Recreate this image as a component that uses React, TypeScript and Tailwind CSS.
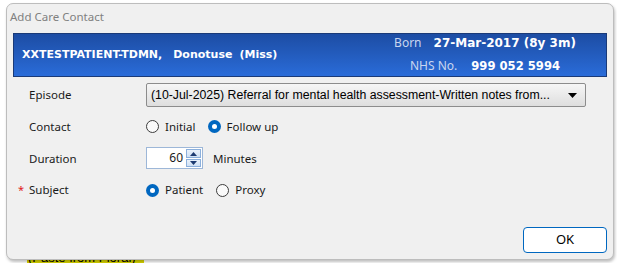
function Radio({ checked }: { checked: boolean }) {
  if (checked) {
    return (
      <span className="w-[13px] h-[13px] rounded-full bg-[#0067c0] flex items-center justify-center shrink-0">
        <span className="w-[5px] h-[5px] rounded-full bg-white" />
      </span>
    );
  }
  return <span className="w-[13px] h-[13px] rounded-full border border-[#3c3c3c] bg-[#fafafa] shrink-0" />;
}

function RadioOption({ checked, label, className }: { checked: boolean; label: string; className?: string }) {
  return (
    <label className={`flex items-center gap-[6px] ${className ?? ''}`}>
      <Radio checked={checked} />
      <span>{label}</span>
    </label>
  );
}

function App() {
  return (
    <div className="relative w-[617px] h-[263px] bg-white overflow-hidden font-['Noto_Sans',sans-serif] text-[11.5px] text-[#1a1a1a]">
      {/* text behind the dialog */}
      <div className="absolute left-[27px] top-[250px] w-[117px] h-[16px] bg-[#d8d400] font-['Liberation_Sans',sans-serif] text-[13px] leading-[16px] text-black pl-[1px]">
        (Paste from Floral)
      </div>

      <div className="relative ml-[6px] mt-[3px] w-[608px] h-[257px] rounded-[7px] border border-[#bdbdbd] bg-[#f0f0f0] shadow-[1px_2px_3px_rgba(0,0,0,0.25)] flex flex-col">
        {/* title */}
        <div className="h-[29px] pb-[3px] pl-[3px] flex items-center text-[#808080] text-[11.5px]">Add Care Contact</div>

        {/* patient banner */}
        <div className="mx-[6px] h-[44px] border border-[#1a3a78] bg-gradient-to-b from-[#1d4da4] to-[#2a6cd9] flex items-center font-['DejaVu_Sans',sans-serif] text-white">
          <div className="pl-[8px] font-bold text-[11px] flex">
            <span>XXTESTPATIENT-TDMN,</span>
            <span className="ml-[11px]">Donotuse</span>
            <span className="ml-[7px]">(Miss)</span>
          </div>
          <div className="ml-auto mr-[21px] w-[200px] flex flex-col items-center gap-[5px]">
            <div className="flex items-baseline">
              <span className="font-['Noto_Sans',sans-serif] text-[12px] text-[#c9d6ef]">Born</span>
              <span className="ml-[12px] font-bold text-[12px]">27-Mar-2017 (8y 3m)</span>
            </div>
            <div className="flex items-baseline">
              <span className="font-['Noto_Sans',sans-serif] text-[12px] text-[#c9d6ef]">NHS No.</span>
              <span className="ml-[14px] font-bold text-[11.6px]">999 052 5994</span>
            </div>
          </div>
        </div>

        {/* form */}
        <div className="mt-[6px] pl-[22px] flex flex-col gap-[7.7px]">
          <div className="h-[24px] grid grid-cols-[117px_1fr] items-center">
            <span>Episode</span>
            <div className="w-[440px] h-[24px] rounded-[2px] border border-[#8c8c8c] bg-gradient-to-b from-[#f6f6f6] to-[#dedede] flex items-center pl-[4px] pr-[8px] font-['Liberation_Sans',sans-serif] text-[12.3px] text-black">
              <span className="flex-1 truncate">(10-Jul-2025) Referral for mental health assessment-Written notes from...</span>
              <svg width="9" height="5" viewBox="0 0 9 5" className="ml-[10px]">
                <path d="M0 0h9L4.5 5z" fill="#000" />
              </svg>
            </div>
          </div>

          <div className="h-[24px] grid grid-cols-[117px_1fr] items-center">
            <span>Contact</span>
            <div className="flex items-center">
              <RadioOption checked={false} label="Initial" />
              <RadioOption checked={true} label="Follow up" className="ml-[12px]" />
            </div>
          </div>

          <div className="h-[24px] grid grid-cols-[117px_1fr] items-center">
            <span>Duration</span>
            <div className="flex items-center">
              <div className="w-[57px] h-[22px] border border-[#9db7d8] bg-white flex items-center">
                <span className="flex-1 text-right pr-[3px] text-[12px]">60</span>
                <div className="w-[15px] h-[18px] mr-[1px] flex flex-col gap-[1px]">
                  <div className="flex-1 border border-[#8cb0dc] bg-gradient-to-b from-[#eaf2fb] to-[#cfe0f4] flex items-center justify-center">
                    <svg width="7" height="4" viewBox="0 0 7 4"><path d="M0 4h7L3.5 0z" fill="#1c3a70" /></svg>
                  </div>
                  <div className="flex-1 border border-[#8cb0dc] bg-gradient-to-b from-[#eaf2fb] to-[#cfe0f4] flex items-center justify-center">
                    <svg width="7" height="4" viewBox="0 0 7 4"><path d="M0 0h7L3.5 4z" fill="#1c3a70" /></svg>
                  </div>
                </div>
              </div>
              <span className="ml-[10px]">Minutes</span>
            </div>
          </div>

          <div className="h-[24px] grid grid-cols-[117px_1fr] items-center">
            <span className="relative">
              <span className="absolute -left-[11px] top-[1px] text-[#e02020] text-[11px]">*</span>
              Subject
            </span>
            <div className="flex items-center">
              <RadioOption checked={true} label="Patient" />
              <RadioOption checked={false} label="Proxy" className="ml-[13px]" />
            </div>
          </div>
        </div>

        {/* footer */}
        <div className="mt-auto flex justify-end pr-[6px] pb-[6px]">
          <button className="w-[84px] h-[26px] rounded-[4px] border border-[#0067c0] bg-white text-[13px] text-black">OK</button>
        </div>
      </div>
    </div>
  );
}

export default App;
